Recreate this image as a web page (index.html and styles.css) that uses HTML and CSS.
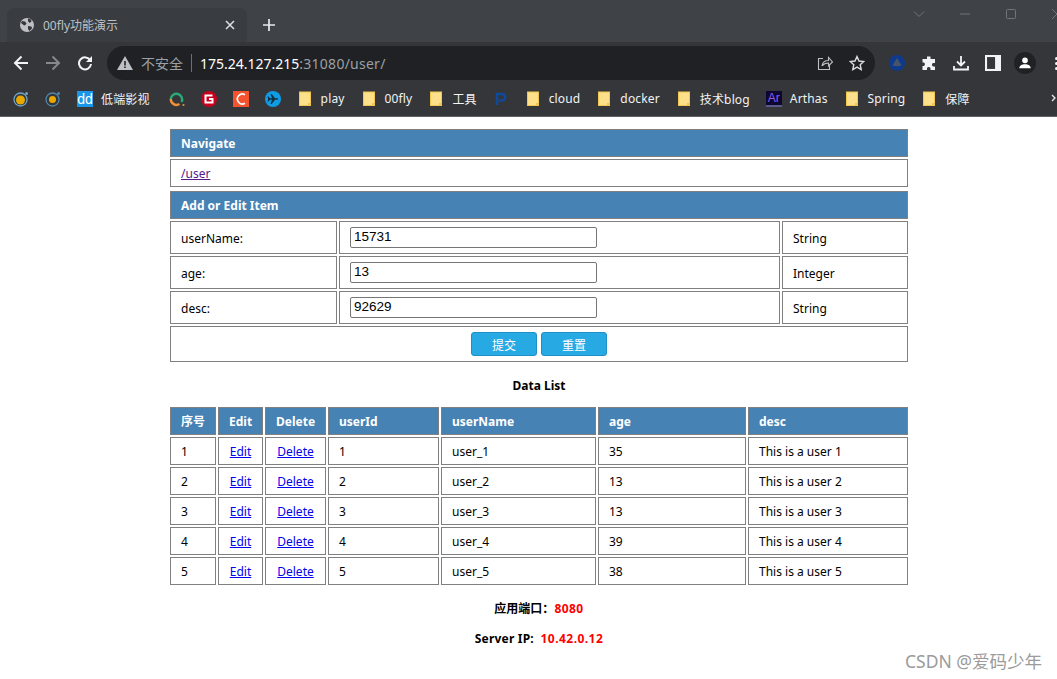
FILE: index.html
```html
<!DOCTYPE html>
<html lang="zh">
<head>
<meta charset="utf-8">
<title>00fly功能演示</title>
<link rel="stylesheet" href="styles.css">
</head>
<body>
<header class="browser">
  <div class="tabstrip">
    <div class="tab">
      <svg class="ico16" viewBox="0 0 16 16"><circle cx="8" cy="8" r="7" fill="#bdc1c6"/><path d="M3 4l3 .5 1.500 2-1.500 2-1.500-.5-2.500-2zM9 1.500l3 1 .5 2-2 1.500-1.500-2zM9 9l3.500.5 .5 2-2.500 2.500-1.500-2z" fill="#35363a"/></svg>
      <span class="tab-title">00fly功能演示</span>
      <svg class="tab-close" viewBox="0 0 10 10"><path d="M1 1l8 8M9 1l-8 8" stroke="#dfe1e5" stroke-width="1.500"/></svg>
    </div>
    <svg class="tab-new" viewBox="0 0 14 14"><path d="M7 1v12M1 7h12" stroke="#e8eaed" stroke-width="1.700"/></svg>
    <div class="winctl">
      <svg class="win-ico" viewBox="0 0 12 12"><path d="M1 3.500l5 5 5-5" fill="none" stroke="#72767a"/></svg>
      <svg class="win-ico" viewBox="0 0 12 12"><path d="M1 6h10" stroke="#72767a"/></svg>
      <svg class="win-ico" viewBox="0 0 12 12"><rect x="1.500" y="1.500" width="9" height="9" rx="1" fill="none" stroke="#72767a"/></svg>
      <svg class="win-ico" viewBox="0 0 12 12"><path d="M1 1l10 10M11 1l-10 10" stroke="#72767a"/></svg>
    </div>
  </div>
  <div class="toolbar">
    <svg class="tool" viewBox="0 0 16 16"><path d="M15 8H2.500M8.500 1.500L2 8l6.500 6.500" fill="none" stroke="#f1f3f4" stroke-width="2"/></svg>
    <svg class="tool" viewBox="0 0 16 16"><path d="M1 8h12.500M7.500 1.500L14 8l-6.500 6.500" fill="none" stroke="#85888c" stroke-width="2"/></svg>
    <svg class="tool" viewBox="0 0 16 16"><path d="M13.300 5.500A6 6 0 1 0 14 9" fill="none" stroke="#f1f3f4" stroke-width="2"/><path d="M15 1v6H9z" fill="#f1f3f4"/></svg>
    <div class="omnibox">
      <svg class="warn" viewBox="0 0 16 14"><path d="M8 0l8 14H0z" fill="#bdc1c6"/><path d="M7.200 5h1.600v4.500H7.200zM7.200 10.500h1.600V12H7.200z" fill="#202124"/></svg>
      <span class="insecure">不安全</span>
      <span class="sep"></span>
      <span class="url"><b class="host">175.24.127.215</b>:31080/user/</span>
      <svg class="omni-ico share" viewBox="0 0 16 16"><path d="M6 3.500H1.500v11h11V10M5 11c.5-3.500 3-5.500 6.500-5.500V2.500L15.500 7l-4 4V8c-3 0-5 1-6.500 3z" fill="none" stroke="#bdc1c6" stroke-width="1.100"/></svg>
      <svg class="omni-ico" viewBox="0 0 16 16"><path d="M8 1.500l2 4.500 4.800.5-3.600 3.200 1 4.800L8 12.100 3.800 14.500l1-4.800L1.200 6.500 6 6z" fill="none" stroke="#dadce0" stroke-width="1.400"/></svg>
    </div>
    <div class="tool-right">
      <svg class="ico16x" viewBox="0 0 16 16"><circle cx="8" cy="8" r="8" fill="#0f3a8c"/><path d="M8 3l4.500 7.500c-2.500 1-6.500 1-9 0z" fill="#4a5468"/></svg>
      <svg class="ico16x" viewBox="0 0 16 16"><path d="M6 1.500h3.500V4H14v4h-2a2 2 0 0 0 0 3.500h2V15H9.500v-2a2 2 0 0 0-3.500 0v2H1.500v-4H3a2.200 2.200 0 0 0 0-3.500H1.500V4H6z" fill="#f1f3f4"/></svg>
      <svg class="ico16x" viewBox="0 0 16 16"><path d="M8 1v9M4 6.500L8 10.500l4-4" fill="none" stroke="#f1f3f4" stroke-width="1.800"/><path d="M1 11v3.500h14V11" fill="none" stroke="#f1f3f4" stroke-width="1.800"/></svg>
      <svg class="ico16x" viewBox="0 0 14 14"><rect width="14" height="14" fill="#f1f3f4"/><rect x="1.800" y="1.800" width="7" height="10.400" fill="#35363a"/></svg>
      <span class="avatar"><svg viewBox="0 0 16 16"><circle cx="8" cy="5" r="3.200" fill="#fff"/><path d="M1.500 14c0-3 3-4.500 6.500-4.500s6.500 1.500 6.500 4.500z" fill="#fff"/></svg></span>
      <span class="dots"><i></i><i></i><i></i></span>
    </div>
  </div>
  <nav class="bookmarks">
    <span class="bm"><svg class="ico16" viewBox="0 0 16 16"><circle cx="7.500" cy="8.500" r="6.500" fill="none" stroke="#6ea5c8" stroke-width="1.300"/><circle cx="7.500" cy="9" r="4.500" fill="#e8a800"/><circle cx="13.500" cy="2.500" r="1.500" fill="#6ea5c8"/></svg></span>
    <span class="bm"><svg class="ico16" viewBox="0 0 16 16"><circle cx="7.500" cy="8.500" r="6.500" fill="none" stroke="#4f86ab" stroke-width="1.300"/><circle cx="7.500" cy="8.500" r="3.500" fill="#e8a800"/><circle cx="13.500" cy="2.500" r="1.500" fill="#4f86ab"/></svg></span>
    <span class="bm bm-wide"><span class="ico16 dd">dd</span><span class="bm-text">低端影视</span></span>
    <span class="bm"><svg class="ico16" viewBox="0 0 16 16"><path d="M1.800 8A5.700 5.700 0 1 1 12.600 11" fill="none" stroke="#2aa876" stroke-width="2.400"/><path d="M1.800 8A5.700 5.700 0 0 0 10.500 13" fill="none" stroke="#f0913a" stroke-width="2.400"/><circle cx="14.500" cy="14" r="1.100" fill="#f0913a"/></svg></span>
    <span class="bm"><svg class="ico16" viewBox="0 0 16 16"><circle cx="8" cy="8" r="8" fill="#c8001e"/><path d="M11.500 4.500h-7v7h7V8H8" fill="none" stroke="#fff" stroke-width="2"/></svg></span>
    <span class="bm"><svg class="ico16" viewBox="0 0 16 16"><rect width="16" height="16" fill="#f4532e"/><path d="M12 3.700A5 5 0 1 0 12 12.300" fill="none" stroke="#fff" stroke-width="1.600"/></svg></span>
    <span class="bm"><svg class="ico16" viewBox="0 0 16 16"><circle cx="8" cy="8" r="8" fill="#0f9be6"/><path d="M2.500 5.500h1l1.500 1.700h2L5.500 3h1.200l3.300 4.200h2.200c1.400 0 1.400 1.600 0 1.600H10L6.700 13H5.500L7 8.800H5l-1.500 1.700h-1L3.300 8z" fill="#12303f"/></svg></span>
    <span class="bm"><svg class="ico16 folder" viewBox="0 0 16 16"><use href="#f"/></svg><span class="bm-text">play</span></span>
    <span class="bm"><svg class="ico16 folder" viewBox="0 0 16 16"><use href="#f"/></svg><span class="bm-text">00fly</span></span>
    <span class="bm"><svg class="ico16 folder" viewBox="0 0 16 16"><use href="#f"/></svg><span class="bm-text">工具</span></span>
    <span class="bm"><svg class="ico16" viewBox="0 0 16 16"><path d="M4 14V3h5a3 3 0 0 1 0 6.500H6" fill="none" stroke="#0e4a9c" stroke-width="2.600"/></svg></span>
    <span class="bm"><svg class="ico16 folder" viewBox="0 0 16 16"><use href="#f"/></svg><span class="bm-text">cloud</span></span>
    <span class="bm"><svg class="ico16 folder" viewBox="0 0 16 16"><use href="#f"/></svg><span class="bm-text">docker</span></span>
    <span class="bm"><svg class="ico16 folder" viewBox="0 0 16 16"><use href="#f"/></svg><span class="bm-text">技术blog</span></span>
    <span class="bm"><span class="ico16 ar">Ar</span><span class="bm-text">Arthas</span></span>
    <span class="bm"><svg class="ico16 folder" viewBox="0 0 16 16"><use href="#f"/></svg><span class="bm-text">Spring</span></span>
    <span class="bm"><svg class="ico16 folder" viewBox="0 0 16 16"><use href="#f"/></svg><span class="bm-text">保障</span></span>
    <svg class="bm-more" viewBox="0 0 8 8"><path d="M1 1l3 3-3 3" fill="none" stroke="#e8eaed" stroke-width="1.300"/></svg>
  </nav>
  <svg class="defs" width="0" height="0"><defs><g id="f"><rect x="2.500" y="1" width="11" height="13.500" fill="#ffe08a" stroke="#f0c552"/><rect x="11" y="12" width="2.500" height="2.500" fill="#f0c552"/></g></defs></svg>
</header>

<main class="page">
  <table class="tbl">
    <tr><th class="left">Navigate</th></tr>
    <tr><td><a class="visited" href="#user">/user</a></td></tr>
  </table>
  <table class="tbl form">
    <colgroup><col class="c-label"><col class="c-field"><col class="c-type"></colgroup>
    <tr><th class="left" colspan="3">Add or Edit Item</th></tr>
    <tr class="f-row"><td>userName:</td><td><input class="field" type="text" value="15731"></td><td>String</td></tr>
    <tr class="f-row"><td>age:</td><td><input class="field" type="text" value="13"></td><td>Integer</td></tr>
    <tr class="f-row"><td>desc:</td><td><input class="field" type="text" value="92629"></td><td>String</td></tr>
    <tr class="b-row"><td class="center" colspan="3"><button class="btn" type="button">提交</button><button class="btn" type="button">重置</button></td></tr>
  </table>
  <h3 class="title">Data List</h3>
  <table class="tbl data">
    <colgroup><col class="d1"><col class="d2"><col class="d3"><col class="d4"><col class="d5"><col class="d6"><col class="d7"></colgroup>
    <tr><th>序号</th><th>Edit</th><th>Delete</th><th class="left">userId</th><th class="left">userName</th><th class="left">age</th><th class="left">desc</th></tr>
    <tr><td>1</td><td class="center"><a href="#e">Edit</a></td><td class="center"><a href="#d">Delete</a></td><td>1</td><td>user_1</td><td>35</td><td>This is a user 1</td></tr>
    <tr><td>2</td><td class="center"><a href="#e">Edit</a></td><td class="center"><a href="#d">Delete</a></td><td>2</td><td>user_2</td><td>13</td><td>This is a user 2</td></tr>
    <tr><td>3</td><td class="center"><a href="#e">Edit</a></td><td class="center"><a href="#d">Delete</a></td><td>3</td><td>user_3</td><td>13</td><td>This is a user 3</td></tr>
    <tr><td>4</td><td class="center"><a href="#e">Edit</a></td><td class="center"><a href="#d">Delete</a></td><td>4</td><td>user_4</td><td>39</td><td>This is a user 4</td></tr>
    <tr><td>5</td><td class="center"><a href="#e">Edit</a></td><td class="center"><a href="#d">Delete</a></td><td>5</td><td>user_5</td><td>38</td><td>This is a user 5</td></tr>
  </table>
  <p class="info">应用端口：<span class="red">8080</span></p>
  <p class="info wide">Server IP:&nbsp; <span class="red">10.42.0.12</span></p>
</main>
<div class="watermark">CSDN @爱码少年</div>
</body>
</html>
```
FILE: styles.css
```css
* { box-sizing: border-box; }
html, body { margin: 0; height: 100%; overflow: hidden; background: #fff; }
body { font: 12px "Noto Sans", "Noto Sans CJK SC", sans-serif; color: #000; }

.browser { height: 117px; background: #35363a; display: flex; flex-direction: column; overflow: hidden; }
.defs { position: absolute; }
.ico16 { width: 16px; height: 16px; flex: none; display: block; }

.tabstrip { height: 42px; flex: none; background: #3f4347; display: flex; align-items: flex-end; padding-left: 7px; }
.tab { width: 240px; height: 34px; background: #393c40; border-radius: 8px 8px 0 0; display: flex; align-items: center; padding: 0 12px; gap: 8px; }
.tab-title { flex: 1; color: #bdc1c6; font-size: 12px; }
.tab-close { width: 10px; height: 10px; }
.tab-new { width: 14px; height: 14px; margin: 0 0 10px 15px; }
.winctl { margin-left: auto; align-self: flex-start; display: flex; gap: 34px; padding-top: 8px; margin-right: -6px; }
.win-ico { width: 12px; height: 12px; }

.toolbar { height: 42px; flex: none; display: flex; align-items: center; padding-left: 13px; }
.tool { width: 16px; height: 16px; margin-right: 16px; flex: none; }
.omnibox { width: 768px; height: 34px; margin-left: -2px; background: #202124; border-radius: 17px; display: flex; align-items: center; padding-left: 10px; flex: none; }
.warn { width: 16px; height: 14px; }
.insecure { color: #9aa0a6; font-size: 14px; margin-left: 8px; }
.sep { width: 1px; height: 18px; background: #6b6e72; margin: 0 8px; }
.url { color: #9aa0a6; font-size: 14px; flex: 1; letter-spacing: .25px; }
.host { color: #fff; font-weight: 400; letter-spacing: 0; }
.omni-ico { width: 16px; height: 16px; margin-right: 10px; flex: none; }
.omni-ico.share { margin-right: 16px; }
.tool-right { display: flex; align-items: center; gap: 16px; margin-left: 14px; flex: none; }
.ico16x { width: 16px; height: 16px; flex: none; }
.avatar { width: 22px; height: 22px; margin: 0 -3px; border-radius: 50%; background: #202124; display: flex; align-items: center; justify-content: center; flex: none; }
.avatar svg { width: 14px; height: 14px; }
.dots { display: flex; flex-direction: column; gap: 2px; margin-left: 6px; }
.dots i { width: 3px; height: 3px; border-radius: 50%; background: #f1f3f4; display: block; }

.bookmarks { height: 33px; flex: none; display: flex; align-items: center; padding: 0 0 3px 5px; border-bottom: 1px solid #5f6368; position: relative; }
.bm { display: flex; align-items: center; padding: 0 8px; gap: 8px; flex: none; }
.bm-wide { padding-right: 11px; }
.bm-text { color: #f1f3f4; font-size: 12px; letter-spacing: .15px; }
.dd { background: #1a96e8; color: #fff; font: 14px/16px "Liberation Sans", sans-serif; text-align: center; }
.ar { background: #0d0630; color: #8a5cf0; font: 12px/14px "Liberation Sans", sans-serif; text-align: center; border-bottom: 2px solid #5a5a8c; }
.bm-more { position: absolute; right: -2px; top: 10px; width: 8px; height: 8px; }

.page { width: 742px; margin: 10px 0 0 168px; }
.tbl { width: 100%; table-layout: fixed; border-collapse: separate; border-spacing: 2px; }
.tbl th, .tbl td { border: 1px solid #808080; height: 28px; padding: 0 10px; text-align: left; font-weight: 400; }
.tbl th { background: #4682b4; color: #fff; font-weight: 700; text-align: center; }
.tbl th.left { text-align: left; }
.tbl td.center { text-align: center; padding: 0; }
.f-row td { height: 33px; padding-top: 1px; }
.b-row td { height: 36px; }
.c-label { width: 167px; }
.c-field { width: 441px; }
.c-type { width: 126px; }
a { color: #00e; }
a.visited { color: #551a8b; }
.field { width: 247px; height: 21px; margin-top: -1px; border: 1px solid #767676; border-radius: 2px; padding: 0 3px 2px; font: 13.500px "Liberation Sans", sans-serif; color: #000; display: block; }
.btn { width: 66px; height: 24px; margin: 0 2px; border: 1px solid #1f8fc7; border-radius: 3px; background: #27a9e3; color: #fff; font: 12px "Noto Sans CJK SC", sans-serif; padding: 0; vertical-align: middle; }
.title { margin: 14px 0 11px; font-size: 12px; line-height: 16px; text-align: center; font-weight: 700; }
.d1 { width: 46px; }
.d2 { width: 45px; }
.d3 { width: 61px; }
.d4 { width: 111px; }
.d5 { width: 155px; }
.d6 { width: 148px; }
.d7 { width: 160px; }
.info { margin: 14px 0 0; line-height: 16px; text-align: center; font-weight: 700; }
.wide { letter-spacing: .2px; }
.red { color: #f00; letter-spacing: .45px; }
.watermark { position: absolute; left: 905px; top: 648px; font-size: 17.500px; color: #9b9b9b; white-space: nowrap; }
```
